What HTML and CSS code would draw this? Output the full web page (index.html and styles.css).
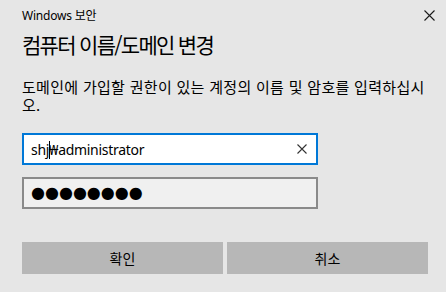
FILE: index.html
```html
<!DOCTYPE html>
<html lang="ko">
<head>
<meta charset="utf-8">
<link rel="stylesheet" href="styles.css">
</head>
<body>
<div class="dialog">
  <div class="header">
    <span class="app">Windows 보안</span>
    <span class="close" aria-label="닫기">
      <svg width="11" height="11" viewBox="0 0 11 11"><path d="M0.5 0.5 L10.5 10.5 M10.5 0.5 L0.5 10.5" stroke="#1a1a1a" stroke-width="1.1" fill="none"/></svg>
    </span>
  </div>
  <h1 class="title">컴퓨터 이름/도메인 변경</h1>
  <p class="desc">도메인에 가입할 권한이 있는 계정의 이름 및 암호를 입력하십시오.</p>
  <div class="fields">
    <div class="field focused">
      <span class="value">shj<span class="caret"></span>₩administrator</span>
      <svg class="clear" width="10" height="10" viewBox="0 0 10 10"><path d="M0.5 0.5 L9.5 9.5 M9.5 0.5 L0.5 9.5" stroke="#333" stroke-width="1.1" fill="none"/></svg>
    </div>
    <div class="field password">
      <span class="dots">●●●●●●●●</span>
    </div>
  </div>
  <div class="buttons">
    <button class="btn">확인</button>
    <button class="btn">취소</button>
  </div>
</div>
</body>
</html>
```
FILE: styles.css
```css
html, body {
  margin: 0;
  padding: 0;
  background: #e6e6e6;
}
body {
  width: 446px;
  height: 292px;
  overflow: hidden;
  font-family: "Noto Sans", "Noto Sans CJK KR", sans-serif;
  color: #000;
}
.dialog {
  padding: 0 18px 0 22px;
}
.header {
  display: flex;
  justify-content: space-between;
  align-items: center;
  height: 30px;
}
.app {
  font-size: 12px;
  letter-spacing: -0.2px;
  color: #000;
}
.close {
  display: flex;
  margin-right: -7px;
}
.title {
  margin: 0;
  font-weight: normal;
  font-size: 21px;
  letter-spacing: -1.7px;
  line-height: 28px;
  height: 28px;
  font-family: "Noto Sans CJK KR", sans-serif;
}
.desc {
  margin: 20px 0 0 0;
  font-size: 15px;
  line-height: 18px;
  font-family: "Noto Sans CJK KR", sans-serif;
  letter-spacing: 0.3px;
}
.fields {
  display: flex;
  flex-direction: column;
  gap: 12px;
  margin-top: 19px;
  width: 296px;
}
.field {
  box-sizing: border-box;
  height: 32px;
  border: 2px solid #8a8a8a;
  background: #f0f0f0;
  display: flex;
  align-items: center;
  padding: 0 9px 0 7px;
}
.field.focused {
  border-color: #0078d7;
  background: #fff;
}
.value {
  flex: 1;
  font-size: 14px;
  font-family: "Noto Sans", "Noto Sans CJK KR", sans-serif;
  letter-spacing: -0.3px;
}
.caret {
  display: inline-block;
  width: 1px;
  height: 18px;
  background: #000;
  vertical-align: -4px;
  margin-right: -1px;
}
.clear {
  flex: none;
}
.dots {
  font-size: 16px;
  font-family: "DejaVu Sans", sans-serif;
  line-height: 1;
}
.buttons {
  display: grid;
  grid-template-columns: 1fr 1fr;
  gap: 4px;
  margin-top: 33px;
}
.btn {
  height: 32px;
  border: none;
  background: #b7b7b7;
  font-family: "Noto Sans CJK KR", sans-serif;
  font-size: 14px;
  color: #000;
  padding: 0;
}
```
